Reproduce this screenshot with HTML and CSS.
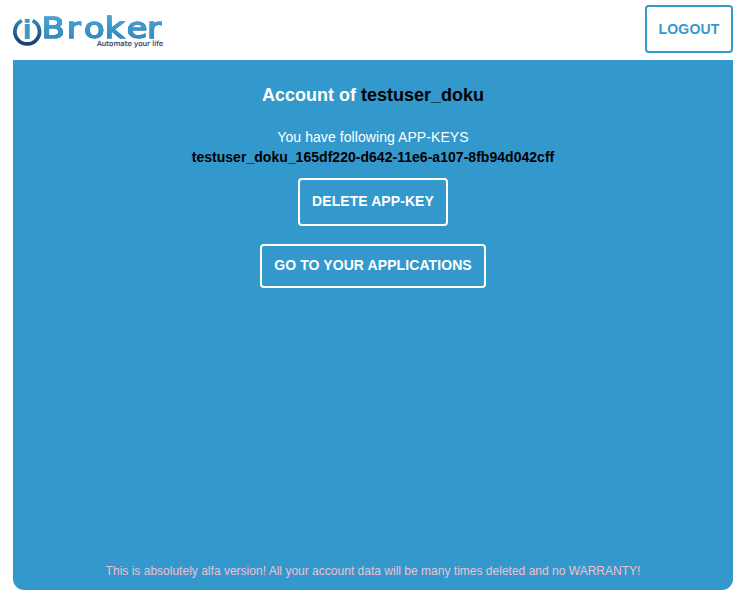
FILE: index.html
```
<!DOCTYPE html>
<html lang="en">
<head>
<meta charset="utf-8">
<title>ioBroker account</title>
<link rel="stylesheet" href="styles.css">
</head>
<body>
<header class="header">
  <svg class="logo" width="152" height="34" viewBox="0 0 152 34" role="img" aria-label="iBroker">
    <defs>
      <linearGradient id="ring" x1="0" y1="0" x2="0" y2="1"><stop offset="0" stop-color="#3383b5"/><stop offset=".6" stop-color="#225b8c"/><stop offset="1" stop-color="#173f70"/></linearGradient>
      <linearGradient id="word" x1="0" y1="0" x2="0" y2="1"><stop offset="0" stop-color="#48aadb"/><stop offset="1" stop-color="#3283b8"/></linearGradient>
    </defs>
    <path class="ring" d="M8.8 7.6A12.3 12.3 0 1 0 19.6 7.6"/>
    <text class="mark" x="9.4" y="25.5">i</text>
    <text class="word" transform="scale(1.2 1)" x="24 44.8 59.1 76.4 94.9 111.8" y="25.2">Broker</text>
    <text class="slogan" x="84" y="32.6" textLength="66" lengthAdjust="spacingAndGlyphs">Automate your life</text>
  </svg>
  <button class="button logout">LOGOUT</button>
</header>
<main class="panel">
  <h1 class="title">Account of <span class="dark">testuser_doku</span></h1>
  <p class="intro">You have following APP-KEYS</p>
  <p class="key">testuser_doku_165df220-d642-11e6-a107-8fb94d042cff</p>
  <button class="button delete">DELETE APP-KEY</button>
  <button class="button apps">GO TO YOUR APPLICATIONS</button>
  <footer class="warning">This is absolutely alfa version! All your account data will be many times deleted and no WARRANTY!</footer>
</main>
</body>
</html>
```
FILE: styles.css
```
* { box-sizing: border-box; }
body {
  margin: 0;
  width: 741px;
  height: 594px;
  padding: 0 8px 0 13px;
  overflow: hidden;
  background: #fff;
  font-family: "Liberation Sans", Arial, sans-serif;
}
.header {
  height: 60px;
  display: flex;
  justify-content: space-between;
  align-items: flex-start;
  padding-top: 5px;
}
.logo { display: block; margin-top: 8px; overflow: visible; }
.ring { fill: none; stroke: url(#ring); stroke-width: 3.8; }
.mark { font: bold 27px "DejaVu Sans", sans-serif; fill: #3c9acb; }
.word {
  font: 28px "DejaVu Sans", sans-serif;
  fill: url(#word);
  stroke: url(#word);
  stroke-width: 1.2px;
  filter: drop-shadow(.5px .7px 0 #23689a);
}
.slogan { font: 7px "DejaVu Sans", sans-serif; fill: #24406c; stroke: #24406c; stroke-width: .2px; }
.button {
  font: bold 14px/18px "Liberation Sans", Arial, sans-serif;
  color: #fff;
  background: transparent;
  border: 2px solid #fff;
  border-radius: 4px;
  padding: 0;
  white-space: nowrap;
}
.logout { width: 88px; height: 48px; color: #3399cc; border-color: #3399cc; letter-spacing: .2px; }
.panel {
  height: 530px;
  display: flex;
  flex-direction: column;
  align-items: center;
  background: #3399cc;
  border-radius: 0 0 11px 11px;
  color: #fff;
}
.title { margin: 23px 0 0; font-size: 18px; line-height: 24px; }
.dark { color: #000; }
.intro { margin: 20px 0 0; font-size: 14px; line-height: 20px; letter-spacing: .07px; }
.key { margin: 0; font-size: 14px; line-height: 20px; font-weight: bold; color: #000; letter-spacing: .03px; }
.delete { width: 150px; height: 48px; margin-top: 11px; padding-bottom: 2px; letter-spacing: .07px; }
.apps { width: 226px; height: 44px; margin-top: 18px; padding-bottom: 2px; letter-spacing: .09px; }
.warning { margin-top: auto; margin-bottom: 11px; font-size: 12px; line-height: 16px; color: #edc0d0; letter-spacing: .01px; }
```
